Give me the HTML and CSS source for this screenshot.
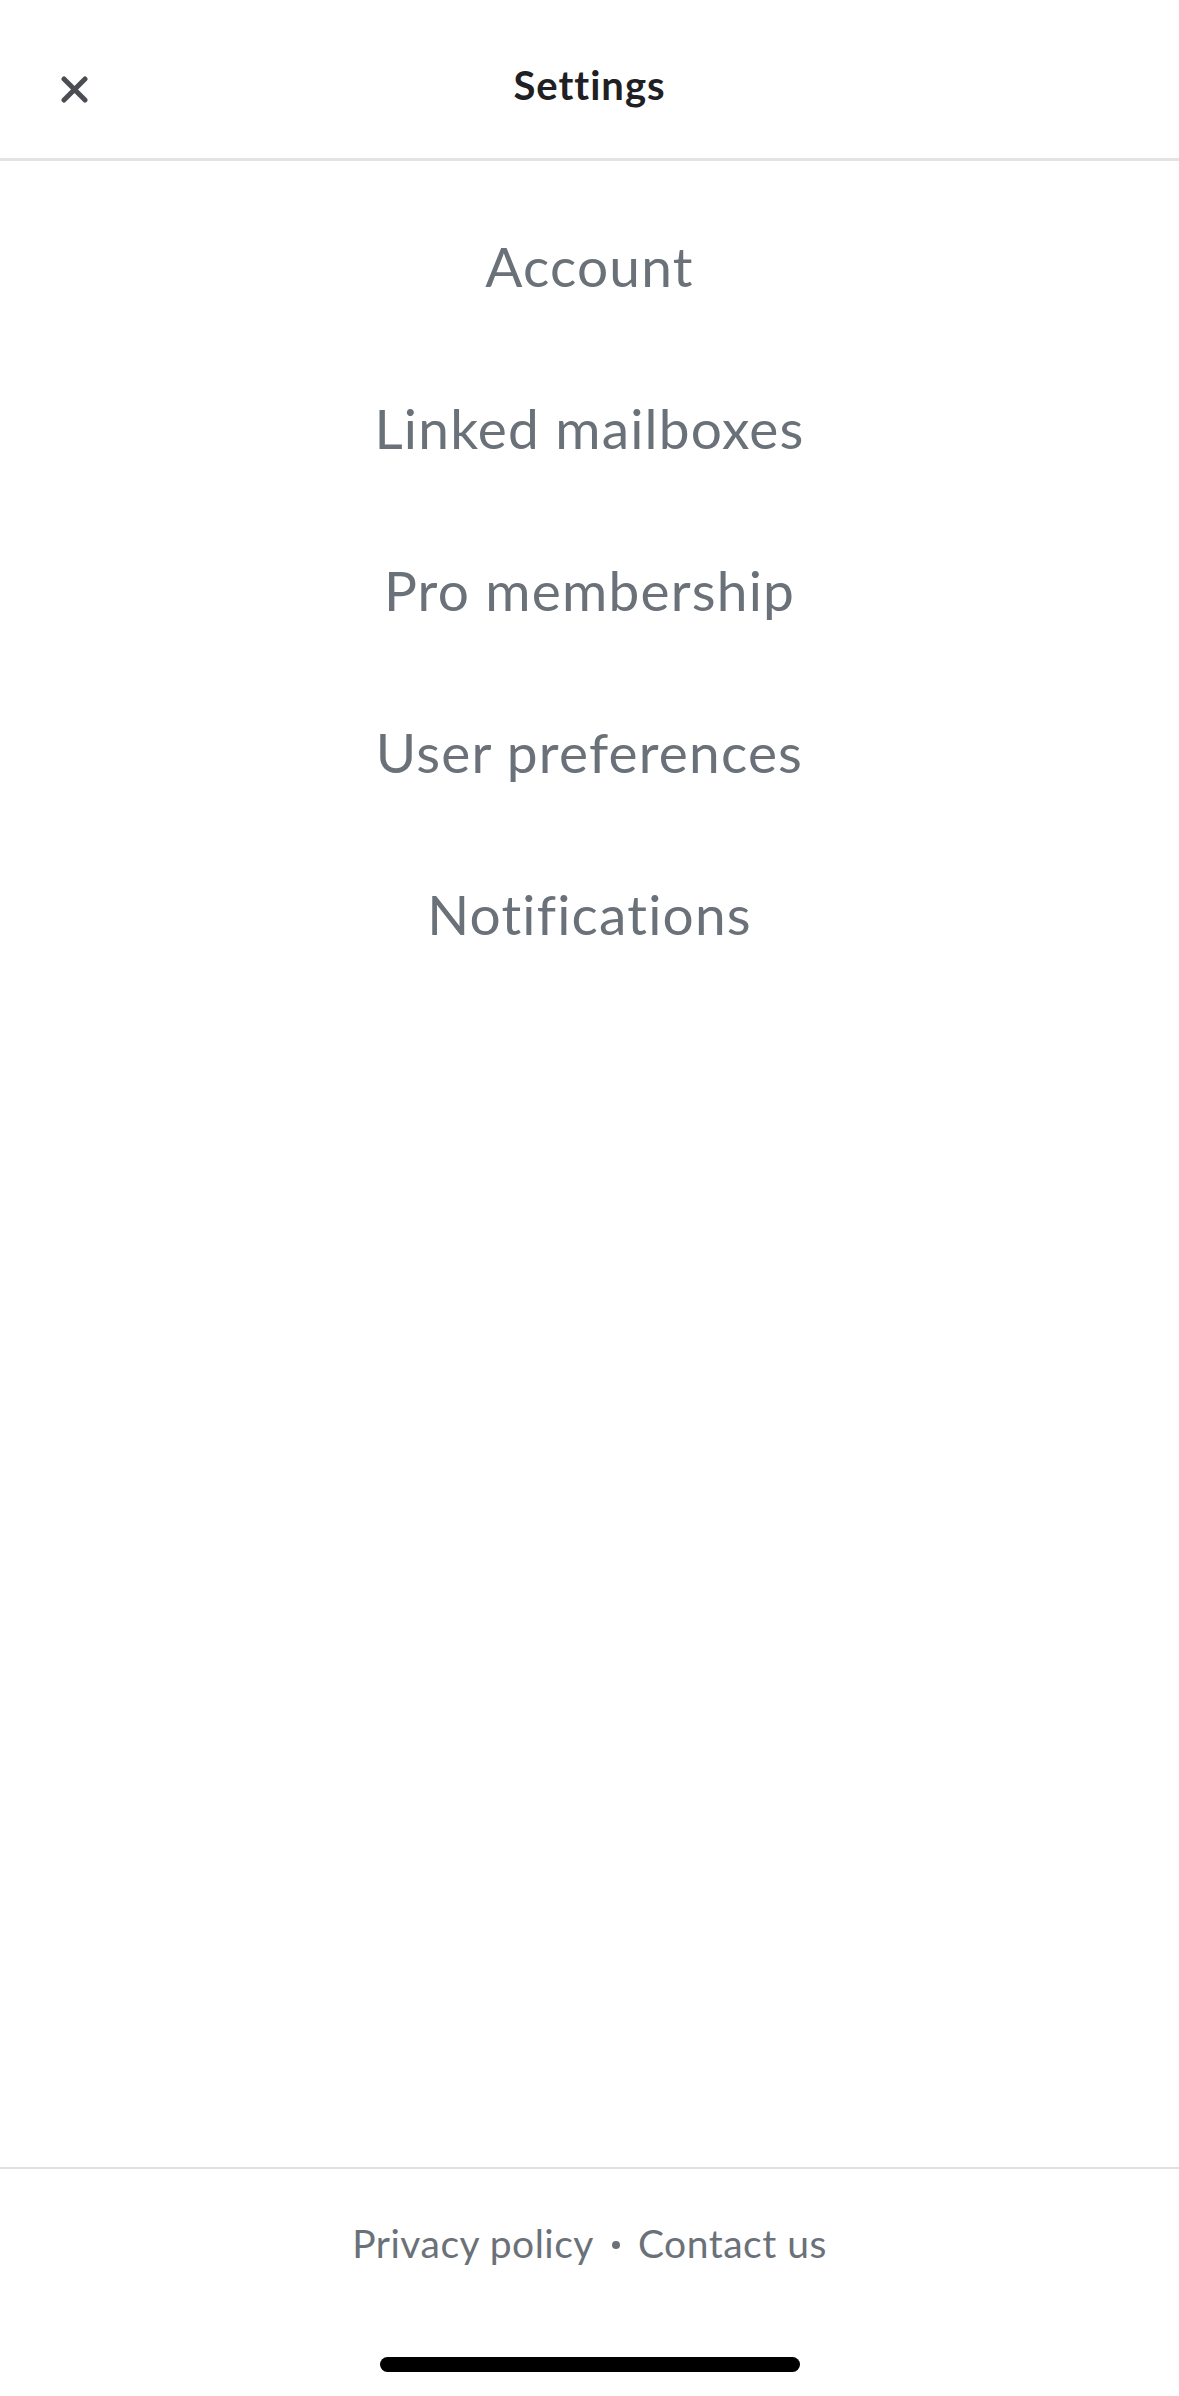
FILE: index.html
```html
<!DOCTYPE html>
<html lang="en">
<head>
    <meta charset="UTF-8">
    <meta name="viewport" content="width=1179, initial-scale=1.0">
    <title>Settings</title>
    <link rel="stylesheet" href="styles.css">
</head>
<body>
    <div class="screen">
        <header class="top-bar">
            <button class="close-button" aria-label="Close">
                <svg width="27" height="27" viewBox="0 0 27 27">
                    <path d="M3 3 L24 24 M24 3 L3 24" stroke="#4a4d52" stroke-width="5" stroke-linecap="round" fill="none"/>
                </svg>
            </button>
            <span class="top-title">Settings</span>
        </header>

        <!-- Einstellungen -->
        <nav class="settings-list">
            <a class="settings-item" href="#">Account</a>
            <a class="settings-item" href="#">Linked mailboxes</a>
            <a class="settings-item" href="#">Pro membership</a>
            <a class="settings-item" href="#">User preferences</a>
            <a class="settings-item" href="#">Notifications</a>
        </nav>

        <footer class="bottom-bar">
            <div class="footer-links">
                <a href="#">Privacy policy</a>
                <span class="dot"></span>
                <a href="#">Contact us</a>
            </div>
            <div class="home-indicator"></div>
        </footer>
    </div>
</body>
</html>
```

FILE: styles.css
```css
body {
    margin: 0;
    font-family: Lato, "Noto Sans", sans-serif;
    background-color: #ffffff;
    color: #6b7178;
}
.screen {
    display: flex;
    flex-direction: column;
    min-height: 100vh;
}
.top-bar {
    position: relative;
    display: flex;
    align-items: center;
    justify-content: center;
    height: 158px;
    border-bottom: 3px solid #e3e3e3;
}
.close-button {
    position: absolute;
    left: 61px;
    top: 76px;
    padding: 0;
    border: none;
    background-color: transparent;
    width: 27px;
    height: 27px;
    display: flex;
}
.top-title {
    font-size: 40px;
    font-weight: 700;
    letter-spacing: 1px;
    color: #1f2023;
    padding-top: 12px;
}
.settings-list {
    flex: 1;
    display: flex;
    flex-direction: column;
    align-items: center;
    padding-top: 24px;
}
.settings-item {
    font-size: 55px;
    letter-spacing: 1.2px;
    line-height: 162px;
    color: #6b7178;
    text-decoration: none;
}
.bottom-bar {
    border-top: 2px solid #e0e0e0;
    display: flex;
    flex-direction: column;
    align-items: center;
    padding: 50px 0 24px;
}
.footer-links {
    display: flex;
    align-items: center;
    gap: 18px;
    font-size: 39px;
    letter-spacing: 0.5px;
    line-height: 48px;
}
.footer-links a {
    color: #6b7178;
    text-decoration: none;
}
.dot {
    width: 8px;
    height: 8px;
    border-radius: 50%;
    background-color: #6b7178;
    margin-top: 4px;
}
.home-indicator {
    margin-top: 90px;
    width: 420px;
    height: 15px;
    border-radius: 8px;
    background-color: #000000;
}
```
